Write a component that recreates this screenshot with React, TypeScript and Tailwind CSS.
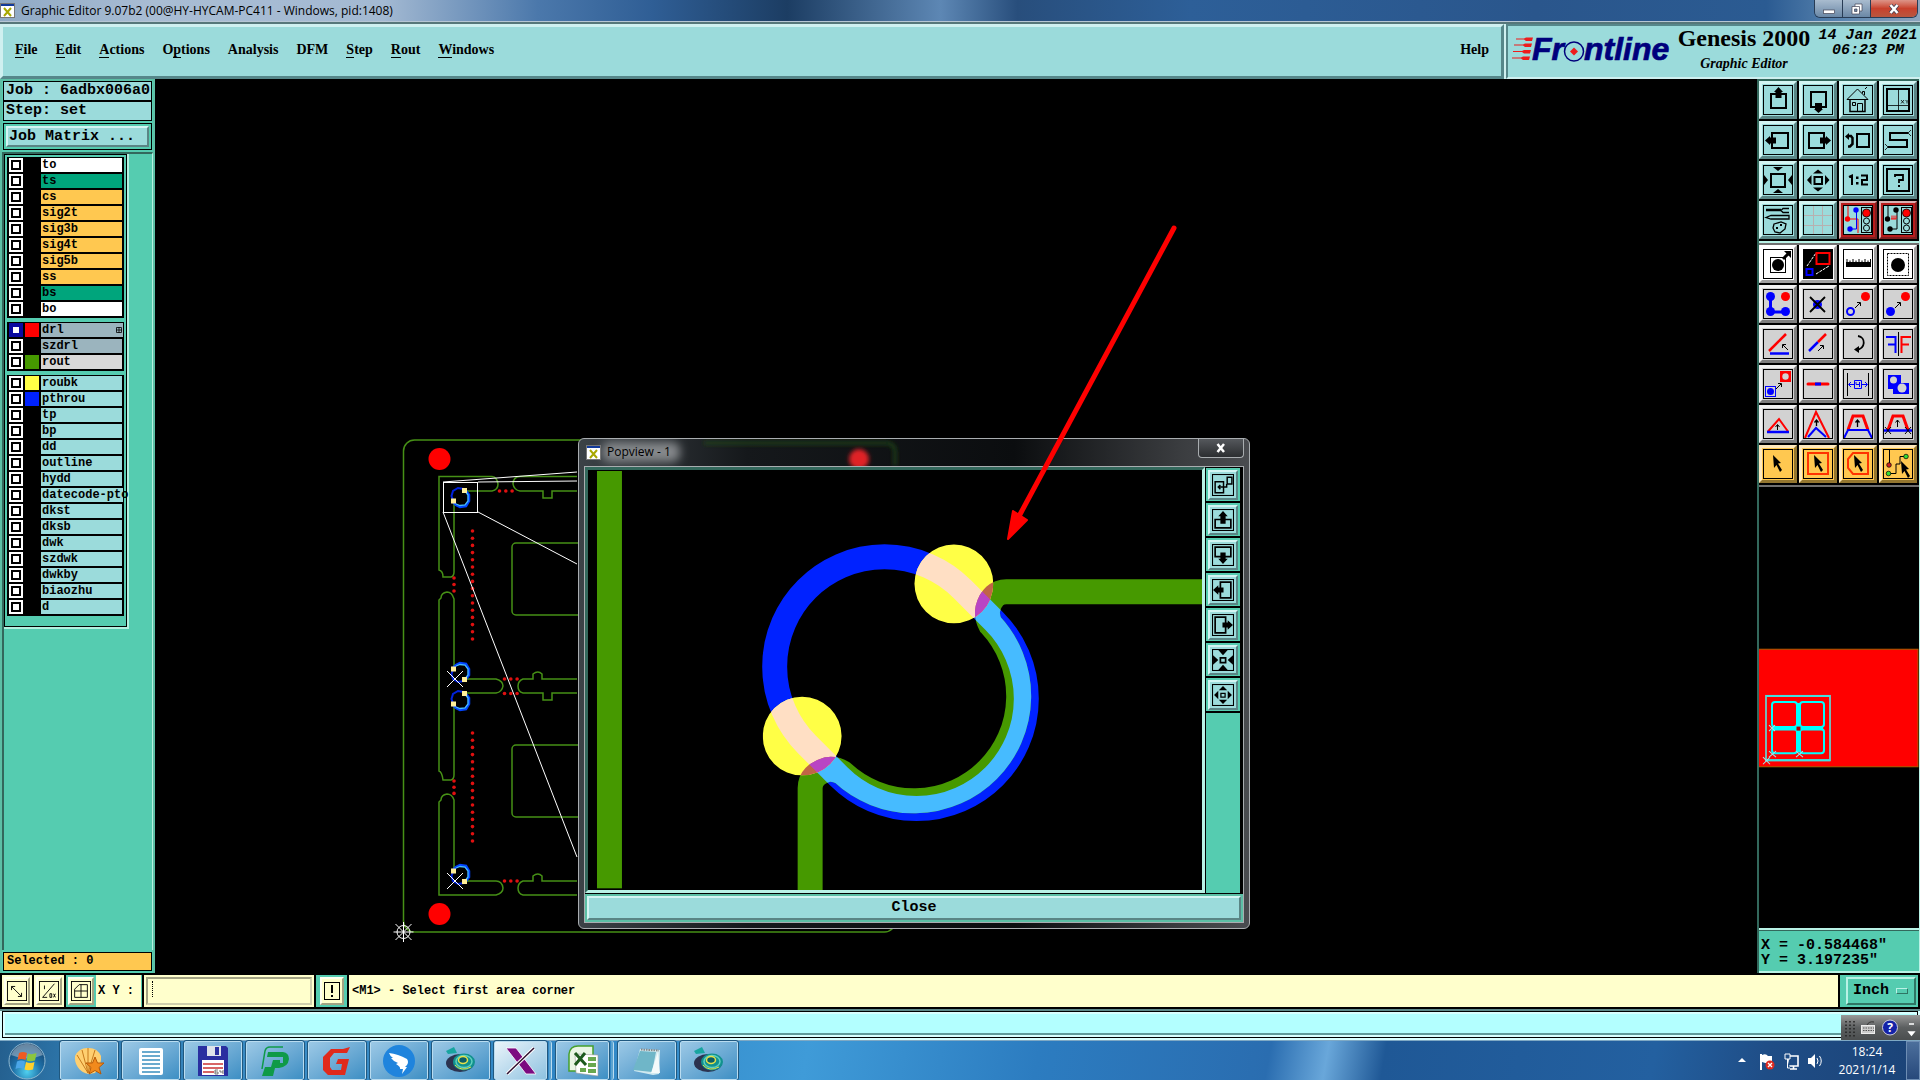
import React from 'react';

const MONO = "font-['Liberation_Mono',monospace] font-bold";
const SERIF = "font-['Liberation_Serif',serif] font-bold";
const SANS = "font-['Open_Sans',sans-serif]";
const AQUA = 'bg-[#9bdbdb] border-t-[#d3f5f3] border-l-[#d3f5f3] border-b-[#5a8585] border-r-[#5a8585]';
const GREY = 'bg-[#d2d2d2] border-t-[#f2f2f2] border-l-[#f2f2f2] border-b-[#7e7e7e] border-r-[#7e7e7e]';
const WHITE = 'bg-white border-t-white border-l-white border-b-[#a0a0a0] border-r-[#a0a0a0]';
const ORANGE = 'bg-[#ffc850] border-t-[#ffe9bd] border-l-[#ffe9bd] border-b-[#94762f] border-r-[#94762f]';
const RED = 'bg-[#9bdbdb] border-t-[#d9b0b0] border-l-[#d9b0b0] border-b-[#7c2020] border-r-[#7c2020]';
const CREAM = 'bg-[#ffffcc] border-t-[#fffff0] border-l-[#fffff0] border-b-[#a3a383] border-r-[#a3a383]';

const menus: [string, string, string][] = [
    ['', 'F', 'ile'],
    ['', 'E', 'dit'],
    ['', 'A', 'ctions'],
    ['O', 'p', 'tions'],
    ['Analysis', '', ''],
    ['DFM', '', ''],
    ['', 'S', 'tep'],
    ['', 'R', 'out'],
    ['', 'W', 'indows'],
];

interface Layer {
    name: string;
    bg: string;
    swatch?: string;
    active?: boolean;
}

const layerGroups: Layer[][] = [
    [
        { name: 'to', bg: 'bg-white' },
        { name: 'ts', bg: 'bg-[#00a57c]' },
        { name: 'cs', bg: 'bg-[#ffc850]' },
        { name: 'sig2t', bg: 'bg-[#ffc850]' },
        { name: 'sig3b', bg: 'bg-[#ffc850]' },
        { name: 'sig4t', bg: 'bg-[#ffc850]' },
        { name: 'sig5b', bg: 'bg-[#ffc850]' },
        { name: 'ss', bg: 'bg-[#ffc850]' },
        { name: 'bs', bg: 'bg-[#00a57c]' },
        { name: 'bo', bg: 'bg-white' },
    ],
    [
        { name: 'drl', bg: 'bg-[#9bb4be]', swatch: 'bg-[#ff0000]', active: true },
        { name: 'szdrl', bg: 'bg-[#9bb4be]' },
        { name: 'rout', bg: 'bg-[#d8d8d8]', swatch: 'bg-[#469900]' },
    ],
    [
        { name: 'roubk', bg: 'bg-[#9bdbdb]', swatch: 'bg-[#ffff46]' },
        { name: 'pthrou', bg: 'bg-[#9bdbdb]', swatch: 'bg-[#0022ff]' },
        { name: 'tp', bg: 'bg-[#9bdbdb]' },
        { name: 'bp', bg: 'bg-[#9bdbdb]' },
        { name: 'dd', bg: 'bg-[#9bdbdb]' },
        { name: 'outline', bg: 'bg-[#9bdbdb]' },
        { name: 'hydd', bg: 'bg-[#9bdbdb]' },
        { name: 'datecode-pto', bg: 'bg-[#9bdbdb]' },
        { name: 'dkst', bg: 'bg-[#9bdbdb]' },
        { name: 'dksb', bg: 'bg-[#9bdbdb]' },
        { name: 'dwk', bg: 'bg-[#9bdbdb]' },
        { name: 'szdwk', bg: 'bg-[#9bdbdb]' },
        { name: 'dwkby', bg: 'bg-[#9bdbdb]' },
        { name: 'biaozhu', bg: 'bg-[#9bdbdb]' },
        { name: 'd', bg: 'bg-[#9bdbdb]' },
    ],
];

/* ---------- icon pieces, drawn on a 30x30 grid ---------- */

const cursor = (x: number, y: number) => (
    <path
        d="M0 0L8 8L5 8.500L9 15L7 17L3.500 10L1 13Z"
        transform={`translate(${x} ${y})`}
        fill="#000"
    />
);

const trafficLight = (
    <>
        <rect x="18.500" y="2.500" width="10" height="25" fill="#9bdbdb" stroke="#000" />
        <circle cx="23.500" cy="8" r="4" fill="#f00" stroke="#000" strokeWidth=".8" />
        <circle cx="23.500" cy="16" r="3" fill="none" stroke="#000" />
        <circle cx="23.500" cy="23" r="3" fill="none" stroke="#000" />
    </>
);

const smallArrow = (x: number, y: number, flip?: boolean) => (
    <path
        d="M0 6L5 1M2 .5H5.500V4"
        transform={`translate(${x} ${y})${flip ? ' scale(-1 1)' : ''}`}
        fill="none"
        stroke="#000"
    />
);

const topTools: { label: string; tone: string; icon: React.ReactNode }[] = [
    { label: 'Pan up', tone: AQUA, icon: <><path d="M8 9H23V23H8Z" fill="none" stroke="#000" strokeWidth="2" /><path d="M15.500 2L20 7H18.500V13H12.500V7H11Z" /></> },
    { label: 'Pan down', tone: AQUA, icon: <><path d="M8 7H23V22H8Z" fill="none" stroke="#000" strokeWidth="2" /><path d="M15.500 28L20 24H19V18H12V24H11Z" /></> },
    { label: 'Home', tone: AQUA, icon: <><path d="M4 14.500L14.500 4L25 14.500M4 14.500H25M19.500 8.500V6.500H21.500V10M22 4L24 2" fill="none" stroke="#000" /><path d="M7 15V26.500H22V15" fill="none" stroke="#000" strokeWidth="1.500" /><path d="M9.500 17.500H12.500V20.500H9.500ZM14.500 26V18.500H19.500V26" fill="none" stroke="#000" /></> },
    { label: 'Zoom to XY', tone: AQUA, icon: <><path d="M4 4H26V26H4Z" fill="none" stroke="#000" strokeWidth="2" /><path d="M15.500 4V26M4 20.500H26M18 15L21 18.500M21 15L18 18.500M22.500 15L24 16.500L25.500 15M24 16.500V18.500" fill="none" stroke="#000" strokeWidth=".8" /></> },
    { label: 'Pan left', tone: AQUA, icon: <><path d="M9 8H25V23H9Z" fill="none" stroke="#000" strokeWidth="2" /><path d="M2 15.500L7 11V12.500H13V18.500H7V20Z" /></> },
    { label: 'Pan right', tone: AQUA, icon: <><path d="M6 8H21V23H6Z" fill="none" stroke="#000" strokeWidth="2" /><path d="M28 15.500L23 11V12.500H17V18.500H23V20Z" /></> },
    { label: 'Previous zoom', tone: AQUA, icon: <><path d="M14 9H26V22H14Z" fill="none" stroke="#000" strokeWidth="2" /><path d="M5 11H8L9.500 13V19L7 21.500H5" fill="none" stroke="#000" strokeWidth="2.500" /><path d="M2 11.500L6 8V15Z" /></> },
    { label: 'Serpentine', tone: AQUA, icon: <><path d="M25 8H7V15H24V22H5" fill="none" stroke="#000" strokeWidth="2" /><path d="M25 8L28 5M25 8L28 11M5 22L2 19M5 22L2 25" fill="none" stroke="#000" strokeWidth=".8" /></> },
    { label: 'Zoom in', tone: AQUA, icon: <><path d="M8 9H22V22H8Z" fill="none" stroke="#000" strokeWidth="2" /><path d="M10 2H20L15 6ZM10 28H20L15 24ZM1 10V20L5 15ZM29 10V20L25 15Z" /></> },
    { label: 'Zoom out', tone: AQUA, icon: <><path d="M11.500 12H19V19H11.500Z" fill="none" stroke="#000" strokeWidth="2" /><path d="M10 8.500H20L15 4.500ZM10 22.500H20L15 26.500ZM8.500 10V20L4 15ZM22 10V20L26.500 15Z" /></> },
    { label: 'Zoom 1:2', tone: AQUA, icon: <><path d="M6 12L9 10.500V20M18 10.500H24V15H19V19.500H25" fill="none" stroke="#000" strokeWidth="2" /><path d="M13 11.500H15.500V14H13ZM13 17H15.500V19.500H13Z" /></> },
    { label: 'Query', tone: AQUA, icon: <><path d="M4 4H26V26H4Z" fill="none" stroke="#000" strokeWidth="2" /><path d="M12 12V10H20V15H16V18" fill="none" stroke="#000" strokeWidth="1.800" /><path d="M15 20H17V22H15Z" /></> },
    { label: 'Setup', tone: AQUA, icon: <><path d="M3 5H18" stroke="#000" strokeWidth="2.500" /><path d="M26 3.500H20L18 5.500L20 7.500H26M3 12.500L8 10.500H26V14H8ZM11 19L18 17L23 19L22 24L17 28L12 27L10 23Z" fill="none" stroke="#000" strokeWidth="1.300" /><path d="M13 22H15V24H13ZM17 19H19V21H17Z" fill="#000" /></> },
    { label: 'Grid', tone: AQUA, icon: <path d="M10.500 1V29M19.500 1V29M1 10.500H29M1 20.500H29" fill="none" stroke="#b7b0b0" /> },
    { label: 'Nets on', tone: RED, icon: <><path d="M5 1V14H15V28" fill="none" stroke="#f00" /><path d="M13.500 5V24H8" fill="none" stroke="#00f" /><circle cx="4.500" cy="14" r="2.700" fill="#f00" /><circle cx="13" cy="5" r="2.700" fill="#00f" /><circle cx="7" cy="24" r="2.700" fill="#00f" />{trafficLight}</> },
    { label: 'Nets off', tone: RED, icon: <><path d="M5 1V14M14 5V24H8" fill="none" stroke="#000" /><path d="M8 14H13M9 10.500V14M11 10.500V14M13 10.500V14" stroke="#f00" fill="none" /><circle cx="4.500" cy="14" r="2.700" /><circle cx="13" cy="5" r="2.700" /><circle cx="7" cy="24" r="2.700" />{trafficLight}</> },
];

const editTools: { label: string; tone: string; icon: React.ReactNode }[] = [
    { label: 'Move', tone: WHITE, icon: <><rect x="7.500" y="8.500" width="15" height="15" fill="none" stroke="#000" /><circle cx="15" cy="16" r="6" /><path d="M20 10L25 5" stroke="#000" strokeWidth="3" /><path d="M21 2H28V9Z" /></> },
    { label: 'Popview', tone: WHITE, icon: <><rect width="30" height="30" fill="#000" /><path d="M4 17L13 4M13 25L26 17" stroke="#fff" strokeDasharray="3 1" /><rect x="13.500" y="4" width="13" height="11" fill="none" stroke="#f00" strokeWidth="2" /><rect x="3.500" y="20" width="6" height="6" fill="none" stroke="#00f" strokeWidth="2" /></> },
    { label: 'Measure', tone: WHITE, icon: <><path d="M3 13H28V18H3Z" /><path d="M4 10V14M7 11.500V14M10 10V14M13 11.500V14M16 10V14M19 11.500V14M22 10V14M25 11.500V14M27.500 10V14" stroke="#000" /></> },
    { label: 'Select feature', tone: WHITE, icon: <><rect x="4.500" y="4.500" width="21" height="22" fill="none" stroke="#000" strokeDasharray="2 1" /><circle cx="15" cy="16" r="7" /></> },
    { label: 'Polyline', tone: GREY, icon: <><path d="M7.500 8V23H22" fill="none" stroke="#00f" strokeWidth="3" /><circle cx="7.500" cy="7.500" r="4.500" fill="#00f" /><circle cx="7.500" cy="22.500" r="4.500" fill="#00f" /><circle cx="22.500" cy="22.500" r="4.500" fill="#00f" /><circle cx="22.500" cy="7.500" r="4.500" fill="#f00" /></> },
    { label: 'Delete', tone: GREY, icon: <><circle cx="14.500" cy="15.500" r="4.500" fill="#00f" /><path d="M7 8L22 23M22 8L7 23" stroke="#000" strokeWidth="1.800" /></> },
    { label: 'Copy pad', tone: GREY, icon: <><circle cx="7.500" cy="22.500" r="3.500" fill="none" stroke="#00f" strokeWidth="2" /><circle cx="22.500" cy="7.500" r="4.500" fill="#f00" />{smallArrow(12, 13)}</> },
    { label: 'Move pad', tone: GREY, icon: <><circle cx="7.500" cy="22.500" r="4.500" fill="#00f" /><circle cx="22.500" cy="7.500" r="4.500" fill="#f00" />{smallArrow(12, 13)}</> },
    { label: 'Rotate line', tone: GREY, icon: <><path d="M6 22L23 5" stroke="#f00" strokeWidth="2.500" /><path d="M7 24.500H26" stroke="#00f" strokeWidth="2.500" />{smallArrow(25, 15, true)}</> },
    { label: 'Stretch line', tone: GREY, icon: <><path d="M6 22L15 13" stroke="#00f" strokeWidth="2.500" /><path d="M15 13L23 5" stroke="#f00" strokeWidth="2.500" />{smallArrow(15, 16)}</> },
    { label: 'Rotate', tone: GREY, icon: <><path d="M15 7C23 8 23 20 13 21" fill="none" stroke="#000" strokeWidth="1.800" /><path d="M16 17L11 20.500L16 24Z" /></> },
    { label: 'Mirror', tone: GREY, icon: <><path d="M15.500 3V27" stroke="#000" /><path d="M3 8H12.500V24M12 15.500H5" fill="none" stroke="#00f" strokeWidth="2" /><path d="M28 8H18.500V24M19 15.500H26" fill="none" stroke="#f00" strokeWidth="2" /></> },
    { label: 'Resize', tone: GREY, icon: <><rect x="2.500" y="17.500" width="10" height="10" fill="none" stroke="#00f" /><circle cx="7.500" cy="22.500" r="3.500" fill="#00f" /><rect x="17" y="2" width="11" height="11" fill="#f00" /><circle cx="22.500" cy="7.500" r="3.200" fill="#d2d2d2" />{smallArrow(13, 14)}</> },
    { label: 'Merge line', tone: GREY, icon: <><path d="M5 15H25" stroke="#f00" strokeWidth="3" strokeLinecap="round" /><path d="M12 15H18" stroke="#00f" strokeWidth="3" /></> },
    { label: 'Spacing', tone: GREY, icon: <><path d="M4.500 4V27M25.500 4V27" stroke="#000" /><path d="M6 15.500H11M19 15.500H24M8 13L5.500 15.500L8 18M22 13L24.500 15.500L22 18M11.500 11.500H18.500V19.500H11.500ZM13 13V15.500H16.500M16.500 13V18" fill="none" stroke="#00f" /></> },
    { label: 'Surface', tone: GREY, icon: <><path d="M5 6H18V14H26V25H10V20H5Z" fill="#00f" /><circle cx="10.500" cy="11" r="3.500" fill="#d2d2d2" /><circle cx="19" cy="19" r="4.500" fill="#d2d2d2" /></> },
    { label: 'Slide corner', tone: GREY, icon: <><path d="M5 22.500L16 10L25 22.500" fill="none" stroke="#f00" strokeWidth="2" /><path d="M4 23H26" stroke="#00f" strokeWidth="2.500" /><path d="M14.500 21V16M12.500 18L14.500 15.500L16.500 18" fill="none" stroke="#000" /></> },
    { label: 'Slide peak', tone: GREY, icon: <><path d="M2 29L13 3L26 29" fill="none" stroke="#f00" strokeWidth="2" /><path d="M5 28L13 19L23 28" fill="none" stroke="#00f" strokeWidth="2" /><path d="M13.500 17V11M11.500 13.500L13.500 11L15.500 13.500" fill="none" stroke="#000" strokeWidth="1.300" /></> },
    { label: 'Slide edge', tone: GREY, icon: <><path d="M5 21L10 7H20L25 21" fill="none" stroke="#f00" strokeWidth="3" /><path d="M1 29L5 21H25L29 29" fill="none" stroke="#00f" strokeWidth="2" /><path d="M14.500 18V11M12.500 13.500L14.500 11L16.500 13.500" fill="none" stroke="#000" strokeWidth="1.300" /></> },
    { label: 'Slide between', tone: GREY, icon: <><path d="M5 21L10 7H20L25 21" fill="none" stroke="#f00" strokeWidth="3" /><path d="M1 21.500H29" fill="none" stroke="#00f" strokeWidth="2.500" /><path d="M14.500 18V11M12.500 13.500L14.500 11L16.500 13.500M2 18L8 25M8 18L2 25M22 18L28 25M28 18L22 25" fill="none" stroke="#000" /></> },
    { label: 'Select', tone: ORANGE, icon: cursor(10, 6) },
    { label: 'Select by frame', tone: ORANGE, icon: <><rect x="5" y="4" width="20" height="21" fill="none" stroke="#f30" strokeWidth="2" />{cursor(11, 6)}</> },
    { label: 'Select by polygon', tone: ORANGE, icon: <><path d="M10 4H25V25H10L5 19V10Z" fill="none" stroke="#f30" strokeWidth="2" />{cursor(11, 6)}</> },
    { label: 'Select net', tone: ORANGE, icon: <><path d="M6.500 1V16M7 24.500H13V15H17V7.500H22" fill="none" stroke="#000" /><circle cx="6" cy="16" r="2.300" fill="#c22" stroke="#000" strokeWidth=".7" /><circle cx="5.500" cy="24.500" r="2.300" fill="#3d3" stroke="#000" strokeWidth=".7" /><circle cx="23" cy="7.500" r="2.300" fill="#3d3" stroke="#000" strokeWidth=".7" />{cursor(18, 12)}</> },
];

const popTools: { label: string; icon: React.ReactNode }[] = [
    { label: 'Set area', icon: <path d="M3 7.500H11V18H3ZM14.500 3H19V9.500H14.500ZM14 9.500V12.500H6M8 10.500L6 12.500L8 14.500" fill="none" stroke="#000" strokeWidth="1.400" /> },
    { label: 'Pan view up', icon: <><path d="M3 10H18V18H3Z" fill="none" stroke="#000" strokeWidth="1.600" /><path d="M10.500 2L15 7H13V14H8V7H6Z" /></> },
    { label: 'Pan view down', icon: <><path d="M3 3H18V12H3Z" fill="none" stroke="#000" strokeWidth="1.600" /><path d="M10.500 19L15 14H13V8H8V14H6Z" /></> },
    { label: 'Pan view left', icon: <><path d="M8 3H18V18H8Z" fill="none" stroke="#000" strokeWidth="1.600" /><path d="M1 10.500L6 6V8H11V13H6V15Z" /></> },
    { label: 'Pan view right', icon: <><path d="M3 3H13V18H3Z" fill="none" stroke="#000" strokeWidth="1.600" /><path d="M20 10.500L15 6V8H10V13H15V15Z" /></> },
    { label: 'Zoom view in', icon: <><path d="M8 8.500H13V13H8Z" fill="none" stroke="#000" strokeWidth="1.600" /><path d="M6 1H15L10.500 6ZM6 20H15L10.500 15ZM1 6V15L6 10.500ZM20 6V15L15 10.500Z" /></> },
    { label: 'Zoom view out', icon: <><path d="M8.500 9H12.500V12.500H8.500Z" fill="none" stroke="#000" strokeWidth="1.200" /><path d="M6.500 6H14.500L10.500 2ZM6.500 15H14.500L10.500 19ZM6 6.500V14.500L2 10.500ZM15 6.500V14.500L19 10.500Z" /></> },
];

const ToolButton: React.FC<{ label: string; tone: string; children: React.ReactNode }> = ({ label, tone, children }) => (
    <button aria-label={label} className={`flex h-[38px] w-[38px] items-center justify-center border-[3px] ${tone}`}>
        <svg viewBox="0 0 30 30" className={`h-[30px] w-[30px] shrink-0 ${tone === RED ? 'outline-2 outline-[#b81c1c]' : ''}`}>
            {children}
            <rect x=".5" y=".5" width="29" height="29" fill="none" stroke="#000" />
        </svg>
    </button>
);

const XIcon = () => (
    <svg viewBox="0 0 15 15" className="h-[15px] w-[15px] shrink-0">
        <rect width="15" height="15" fill="#fff" />
        <rect width="15" height="3" fill="#123a9a" />
        <path d="M4 5L11 13M11 5L4 13" stroke="#a8a800" strokeWidth="2" />
        <rect x=".5" y=".5" width="14" height="14" fill="none" stroke="#777" />
    </svg>
);

/* ---------- title + menu ---------- */

const TitleBar = () => (
    <header className="flex h-[22px] shrink-0 justify-between border-b border-[#b7c6d4] bg-[linear-gradient(90deg,#8fa9c4_0%,#a9bdd4_8%,#a3b9d2_20%,#4b78ab_28%,#2f5e95_34%,#1c3d63_41%,#5d87b4_49%,#284e7c_53%,#2d5f98_62%,#2a568c_80%,#2b5b92_92%,#5a85b0_96%,#8da5bd_100%)]">
        <div className="flex items-center gap-1.5">
            <XIcon />
            <h1 className={`${SANS} text-[12px] leading-5 text-black`}>Graphic Editor 9.07b2 (00@HY-HYCAM-PC411 - Windows, pid:1408)</h1>
        </div>
        <div className="mr-[2px] flex h-[18px] overflow-hidden rounded-b-md border border-t-0 border-[#283c55]">
            <button aria-label="Minimize" className="flex w-7 items-center justify-center border-r border-[#283c55] bg-linear-to-b from-[#a9bccf] to-[#6b88a6]">
                <svg viewBox="0 0 12 12" className="h-3 w-3"><rect x=".5" y="7" width="11" height="3.500" fill="#fff" stroke="#445" strokeWidth=".7" /></svg>
            </button>
            <button aria-label="Restore" className="flex w-7 items-center justify-center border-r border-[#283c55] bg-linear-to-b from-[#a9bccf] to-[#6b88a6]">
                <svg viewBox="0 0 12 12" className="h-3 w-3"><path d="M4 1H11V8H4Z" fill="#fff" stroke="#445" strokeWidth=".7" /><path d="M1 3.500H8.500V11H1Z" fill="#fff" stroke="#445" strokeWidth=".7" /><path d="M3.500 6H6V8.500H3.500Z" fill="#6b88a6" stroke="#445" strokeWidth=".7" /></svg>
            </button>
            <button aria-label="Close window" className="flex w-[46px] items-center justify-center bg-linear-to-b from-[#dc9488] via-[#c8402c] to-[#b8563f]">
                <svg viewBox="0 0 12 12" className="h-3 w-3"><path d="M2.500 2L9.500 10M9.500 2L2.500 10" stroke="#445" strokeWidth="4" /><path d="M2.500 2L9.500 10M9.500 2L2.500 10" stroke="#fff" strokeWidth="2.500" /></svg>
            </button>
        </div>
    </header>
);

const FrontlineLogo = () => (
    <svg viewBox="0 0 164 32" className="h-8 w-[164px] shrink-0 overflow-visible">
        <path d="M4 4.500H12L14 3.500H21L20 7H14L12 5.500H4ZM2 10.500H11L13 9.500H20L19 13H13L11 11.500H2ZM1 17H10L12 16H19L18 19.500H12L10 18H1ZM0 23.500H9L11 22.500H18L17 26H11L9 24.500H0Z" fill="#ee1c1c" />
        <g fill="#00007c" stroke="#00007c" strokeWidth=".7" fontFamily="Liberation Sans, sans-serif" fontWeight="bold" fontStyle="italic" fontSize="32">
            <text x="20" y="26">Fr</text>
            <text x="72" y="26">ntline</text>
        </g>
        <circle cx="62" cy="17.500" r="9.500" fill="#9bdbdb" stroke="#00007c" strokeWidth="1.500" />
        <path d="M62 13.500L66 17.500L62 21.500L58 17.500Z" fill="#ee1c1c" />
    </svg>
);

const MenuBar = () => (
    <div className="flex h-[57px] shrink-0 gap-[2px] border-t-2 border-[#56777a] bg-[#cff0f0]">
        <nav className={`${SERIF} flex flex-1 items-center justify-between border-[3px] border-t-[#cff0f0] border-l-[#cff0f0] border-r-[#56878a] border-b-[#56878a] bg-[#9bdbdb] px-3 pb-1 text-[14px] leading-4`}>
            <div className="flex gap-[18px]">
                {menus.map(([pre, key, post]) => (
                    <button key={pre + key + post}>
                        {pre}
                        <span className="border-b border-black">{key}</span>
                        {post}
                    </button>
                ))}
            </div>
            <button>Help</button>
        </nav>
        <div className="flex w-[414px] shrink-0 items-start border-t-2 border-l-2 border-[#56878a] border-b-2 border-b-[#cff0f0] bg-[#9bdbdb] pl-1">
            <div className="pt-2"><FrontlineLogo /></div>
            <div className={`${SERIF} flex w-[136px] flex-col items-center`}>
                <strong className="text-[24px] leading-6">Genesis 2000</strong>
                <em className="mt-1 text-[14px] leading-5">Graphic Editor</em>
            </div>
            <time className={`${MONO} ml-1 flex-1 pt-0.5 text-center text-[15px] leading-[15px] whitespace-nowrap italic`}>
                14 Jan 2021
                <br />
                06:23 PM
            </time>
        </div>
    </div>
);

/* ---------- left column ---------- */

const LayerRow: React.FC<{ layer: Layer }> = ({ layer }) => (
    <li className="flex h-4 items-center gap-[2px] border-b-2 border-black bg-black">
        <label className="flex h-[14px] min-w-0 flex-1 items-center gap-[2px]">
            <input
                type="checkbox"
                defaultChecked={layer.active}
                className={`h-[14px] w-[14px] shrink-0 appearance-none border-2 bg-white outline-2 -outline-offset-4 ${layer.active ? 'border-[#0a0aa0] outline-[#0a0aa0]' : 'border-white outline-black'}`}
            />
            <span className={`h-[14px] w-[14px] shrink-0 ${layer.swatch ?? 'bg-black'}`} />
            <span className={`${MONO} flex h-[14px] w-[82px] items-center pl-px text-[12px] leading-[14px] whitespace-nowrap ${layer.bg}`}>
                {layer.name}
            </span>
        </label>
        {layer.active && (
            <svg viewBox="0 0 6 6" className="-ml-2.5 h-1.5 w-1.5 shrink-0">
                <path d="M.5 .5H5.500V5.500H.5ZM3 0V6M0 3H6" fill="none" stroke="#000" strokeWidth=".8" />
            </svg>
        )}
    </li>
);

const LeftPanel = () => (
    <aside className="flex w-[155px] shrink-0 flex-col gap-[2px] border-t-2 border-r-2 border-l-2 border-[#5cbfa5] bg-[#55ccb0]">
        <div className={`${MONO} mr-px ml-px border border-black bg-[#9bdbdb] text-[15px] leading-[18px] whitespace-pre`}>
            <p className="border-b-2 border-black pl-[2px]">Job : 6adbx006a0</p>
            <p className="pl-[2px]">Step: set</p>
        </div>
        <div className="mr-px ml-px border border-black p-[2px]">
            <button className={`${MONO} block h-[21px] w-full border-2 pl-px text-left text-[15px] leading-[17px] ${AQUA}`}>Job Matrix ...</button>
        </div>
        <div className="flex flex-1 border-t-2 border-l-2 border-[#33685c] border-r border-r-[#b4f0e0]">
            <div className="flex-1">
                <div className="w-[125px] border-r-2 border-b-2 border-[#b4f0e0]">
                    <ul className="flex flex-col gap-1 border border-black p-[2px] pb-2.5">
                        {layerGroups.map((group) => (
                            <li key={group[0].name}>
                                <ul className="border-x-2 border-t border-black">
                                    {group.map((layer) => (
                                        <LayerRow key={layer.name} layer={layer} />
                                    ))}
                                </ul>
                            </li>
                        ))}
                    </ul>
                </div>
            </div>
        </div>
        <p className={`${MONO} mx-px mb-[2px] border border-black bg-[#ffc850] pl-[3px] text-[12px] leading-[17px]`}>Selected : 0</p>
    </aside>
);

/* ---------- board drawing ---------- */

const dotRow = (n: number, x: number, y: number, dx: number, dy: number) =>
    Array.from({ length: n }, (_, i) => <circle key={`${x}-${y}-${i}`} cx={x + i * dx} cy={y + i * dy} r="1.8" />);

const Ring: React.FC<{ cx: number; cy: number; flip?: boolean }> = ({ cx, cy, flip }) => (
    <g transform={`translate(${cx} ${cy})${flip ? ' scale(1 -1)' : ''}`} fill="none">
        <path d="M-7 3L-8.500 -1L-7 -6L-2 -9L4 -8" stroke="#0022dd" strokeWidth="2" />
        <path d="M6 -6L9 -2V4L6 9L0 10L-4 8L-7 5" stroke="#0044ff" strokeWidth="2.500" />
        <path d="M5 -6L8 -2V4L5 8L0 8.500L-4 7" stroke="#46bbff" strokeWidth="1.300" />
        <path d="M2 -9H7V-4H2ZM-9 1.500H-4V6.500H-9Z" fill="#ffee99" />
    </g>
);

const Board = () => (
    <svg viewBox="155 79 1602 894" preserveAspectRatio="xMinYMin meet" className="absolute inset-0 h-full w-full">
        <g fill="none" stroke="#469016" strokeWidth="1.500">
            <rect x="403.500" y="440" width="492" height="492" rx="11" />
            <path d="M467 491H492Q498 490 498 484Q497 477 492 476.500H439V570Q443 571 443 577H451Q454 576 454 572V502" />
            <path d="M454 667V599Q452 592 447 592Q441 593 441 598L439 600V771Q442 772 443 780H451Q454 779 454 775V707" />
            <path d="M454 869V800Q452 794 447 794Q441 795 441 800L439 802V895H496Q503 893 503 888Q502 881 496 881H467" />
            <path d="M467 679H496Q503 681 503 686Q502 692 496 693H467" />
            <path d="M577 476.500H520Q513 477 513 484Q514 490 520 491H543V498H552V491H577" />
            <path d="M577 679H542V674Q538 670 533 674V679H523Q518 681 518 686Q518 692 523 693H543V700H552V693H577" />
            <path d="M577 881H542V876Q538 872 533 876V881H523Q518 883 518 888Q518 894 523 895H577" />
            <rect x="512" y="543" width="160" height="72" rx="4" />
            <rect x="512" y="745" width="160" height="72" rx="4" />
        </g>
        <g fill="#e01010">
            {dotRow(16, 472.5, 531, 0, 7.2)}
            {dotRow(16, 472.5, 733, 0, 7.2)}
            {dotRow(3, 454, 578, 0, 6.5)}
            {dotRow(3, 454, 781, 0, 6.2)}
            {dotRow(3, 499.5, 491, 6.3, 0)}
            {dotRow(3, 504.5, 679, 6.3, 0)}
            {dotRow(3, 504.5, 693.5, 6.3, 0)}
            {dotRow(3, 504.5, 881, 6.3, 0)}
        </g>
        <g fill="#f00">
            <circle cx="439.500" cy="459" r="11" />
            <circle cx="439.500" cy="914" r="11" />
        </g>
        <Ring cx={460} cy={497} />
        <Ring cx={460} cy={673} flip />
        <Ring cx={460} cy={700} />
        <Ring cx={460} cy={875} flip />
        <g fill="none" stroke="#fff">
            <rect x="443.500" y="482.500" width="34" height="30" />
            <path d="M443 482L577 472M478 482L577 481M478 512L577 564M443 512L577 857" />
            <path d="M447 671L463 687M463 671L447 687M447 873L463 889M463 873L447 889" />
            <circle cx="403.500" cy="932" r="6.500" />
            <path d="M393.500 932H413.500M403.500 922V942M395.500 924L411.500 940M411.500 924L395.500 940" />
        </g>
    </svg>
);

/* ---------- popview window ---------- */

const BLUE_PATH = 'M962.8 589.2A110 110 0 1 0 807.200 744.800L839.200 776.800A110 110 0 0 0 994.800 621.200Z';
const GREEN_PATH = 'M1210 592H1007Q993 592 988.500 609Q987 617 991.200 624.800A105 105 0 0 1 842.800 773.200Q836 769 828 770Q810.500 775 810.500 788.500V895';

const PopCanvas = () => (
    <svg viewBox="588 470 615 420" preserveAspectRatio="xMinYMin meet" className="h-full w-full bg-black">
        <defs>
            <mask id="blueMask" maskUnits="userSpaceOnUse" x="588" y="470" width="615" height="420">
                <path d={BLUE_PATH} fill="none" stroke="#fff" strokeWidth="25" />
            </mask>
            <clipPath id="pads">
                <circle cx="954.500" cy="584" r="39.500" />
                <circle cx="802.500" cy="736.500" r="39.500" />
            </clipPath>
        </defs>
        <rect x="597" y="471" width="25" height="418" fill="#469900" />
        <g fill="none" strokeWidth="25">
            <path d={BLUE_PATH} stroke="#0022ff" />
            <path d={GREEN_PATH} stroke="#469900" />
            <g mask="url(#blueMask)"><path d={GREEN_PATH} stroke="#46bbff" /></g>
        </g>
        <g clipPath="url(#pads)" fill="none" strokeWidth="25">
            <rect x="740" y="530" width="270" height="260" fill="#ffff46" stroke="none" />
            <path d={BLUE_PATH} stroke="#ffdfc4" />
            <path d={GREEN_PATH} stroke="#c06446" />
            <g mask="url(#blueMask)"><path d={GREEN_PATH} stroke="#b944c4" /></g>
        </g>
    </svg>
);

const Popview = () => (
    <section className="absolute top-[359px] left-[423px] flex h-[491px] w-[672px] flex-col rounded-md border border-[#a9adb0] bg-[linear-gradient(90deg,#3c4247_0%,#15181b_25%,#0b0d0f_65%,#3b3d40_90%,#4a4c50_100%)] px-[5px] pb-[5px]">
        <div className="relative flex h-[27px] shrink-0 items-start justify-between pl-[2px]">
            <svg viewBox="0 0 660 27" preserveAspectRatio="xMinYMin meet" className="absolute inset-0 h-full w-full">
                <defs>
                    <filter id="glass" x="-50%" y="-50%" width="200%" height="200%"><feGaussianBlur stdDeviation="2" /></filter>
                    <filter id="haze" x="-50%" y="-100%" width="200%" height="300%"><feGaussianBlur stdDeviation="5" /></filter>
                </defs>
                <path d="M120 4H303Q311 5 311 13V27" fill="none" stroke="#1f4416" strokeWidth="3" filter="url(#glass)" />
                <circle cx="275" cy="20" r="10" fill="#e02428" filter="url(#glass)" />
                <rect x="18" y="3" width="78" height="20" rx="8" fill="#85888b" filter="url(#haze)" />
            </svg>
            <div className="relative flex items-center gap-1.5 pt-1">
                <XIcon />
                <h2 className={`${SANS} text-[12px] leading-[18px] text-black`}>Popview - 1</h2>
            </div>
            <button aria-label="Close popview" className="relative flex h-[19px] w-[46px] items-center justify-center rounded-b border border-t-0 border-[#a9adb0] bg-linear-to-b from-[#55585c] to-[#2c2e31]">
                <svg viewBox="0 0 12 12" className="h-3 w-3"><path d="M2.500 2L9 10M9 2L2.500 10" stroke="#fff" strokeWidth="2.500" /></svg>
            </button>
        </div>
        <div className="flex min-h-0 flex-1 flex-col border border-[#a9adb0] bg-black">
            <div className="flex min-h-0 flex-1">
                <div className="min-w-0 flex-1 border-[3px] border-t-[#33685c] border-l-[#33685c] border-r-[#b9f2e6] border-b-[#b9f2e6]">
                    <PopCanvas />
                </div>
                <div className="flex w-[38px] shrink-0 flex-col gap-[2px] pt-px pr-[3px] pl-px">
                    {popTools.map((tool) => (
                        <div key={tool.label} className="flex h-[33px] shrink-0 items-center justify-center bg-[#55ccb0]">
                            <button aria-label={tool.label} className={`flex h-[30px] w-[30px] items-center justify-center border-2 ${AQUA}`}>
                                <svg viewBox="0 0 21 21" className="h-[22px] w-[22px] shrink-0">
                                    {tool.icon}
                                    <rect x=".5" y=".5" width="20" height="20" fill="none" stroke="#000" />
                                </svg>
                            </button>
                        </div>
                    ))}
                    <div className="flex-1 bg-[#55ccb0]" />
                </div>
            </div>
            <div className="mt-px bg-[#5cbfa5] p-[2px]">
                <button className={`${MONO} block h-6 w-full border-2 text-[15px] leading-5 ${AQUA}`}>Close</button>
            </div>
        </div>
    </section>
);

const Canvas = () => (
    <main className="relative min-w-0 flex-1 overflow-hidden bg-black">
        <Board />
        <Popview />
        <svg viewBox="155 79 1602 894" preserveAspectRatio="xMinYMin meet" className="pointer-events-none absolute inset-0 h-full w-full">
            <path d="M1174 228L1017 520" stroke="#f00" strokeWidth="5" strokeLinecap="round" />
            <path d="M1008 539L1013 511L1027 520Z" fill="#f00" stroke="#f00" strokeWidth="2" strokeLinejoin="round" />
        </svg>
    </main>
);

/* ---------- right column ---------- */

const RightPanel = () => (
    <aside className="flex w-[163px] shrink-0 flex-col border-r border-l-2 border-l-[#33685c] border-r-[#b9f2e6] bg-black">
        <div className="grid grid-cols-[repeat(4,38px)] gap-[2px] border-t-2 border-b-2 border-t-[#33685c] border-b-[#b9f2e6] pb-[2px]">
            {topTools.map((tool) => (
                <ToolButton key={tool.label} label={tool.label} tone={tool.tone}>{tool.icon}</ToolButton>
            ))}
        </div>
        <div className="grid grid-cols-[repeat(4,38px)] gap-[2px] border-t-2 border-b-2 border-[#707070] pb-[2px]">
            {editTools.map((tool) => (
                <ToolButton key={tool.label} label={tool.label} tone={tool.tone}>{tool.icon}</ToolButton>
            ))}
        </div>
        <div className="min-h-0 flex-1 border-b-2 border-[#b9f2e6]">
            <svg viewBox="1759 489 160 439" preserveAspectRatio="none" className="h-full w-full">
                <rect x="1758" y="650.500" width="160" height="117" fill="#f00" stroke="#b06000" />
                <rect x="1766" y="697" width="64" height="64" fill="none" stroke="#78b8b8" strokeWidth="2" />
                <g fill="none" stroke="#00ffff" strokeWidth="2">
                    <path d="M1766 697H1830M1766 761H1830" stroke="#40e0e0" />
                    <rect x="1772" y="703" width="25" height="25" rx="3" />
                    <rect x="1800" y="703" width="24" height="25" rx="3" />
                    <rect x="1772" y="730" width="25" height="24" rx="3" />
                    <rect x="1800" y="730" width="24" height="24" rx="3" />
                    <path d="M1798.500 704V753M1773 729.500H1823" strokeWidth="4" />
                </g>
                <path d="M1763 758L1770 765M1770 758L1763 765M1769 726L1775 732M1775 726L1769 732M1769 752L1776 758M1776 752L1769 758M1796 752L1803 758M1803 752L1796 758" stroke="#9ee" fill="none" />
                <path d="M1796.500 727.500H1800.500V731.500H1796.500Z" fill="#a00" />
            </svg>
        </div>
        <div className={`${MONO} h-[43px] border-t border-b-2 border-t-[#33685c] border-b-[#b9f2e6] bg-[#55ccb0] pt-[7px] pl-[2px] text-[15px] leading-[15px] whitespace-pre`}>
            <p>X = -0.584468"</p>
            <p>Y = 3.197235"</p>
        </div>
    </aside>
);

/* ---------- bottom rows ---------- */

const statusIcons: { label: string; wrap: string; d: string }[] = [
    { label: 'Snap', wrap: 'bg-[#ffffcc]', d: 'M5 6L16 17M5 10V6H9M12 17H16V13' },
    { label: 'Angle', wrap: 'bg-[#ffffcc]', d: 'M4 18L17 3M4 18H9M6 5V9M12 14H14V18H12ZM16 14L18 18M18 14L16 18' },
    { label: 'Grid snap', wrap: 'bg-[#55ccb0]', d: 'M4 9L9 4H18V18H4ZM11 4V18M4 11H18' },
];

const StatusRow = () => (
    <div className={`${MONO} flex h-9 shrink-0 gap-[2px] border-y-2 border-black bg-black text-[12px]`}>
        <div className="flex">
            <div className="flex gap-[2px] bg-black pl-[2px]">
                {statusIcons.map((icon) => (
                    <div key={icon.label} className={`flex w-[30px] items-center justify-center ${icon.wrap}`}>
                        <button aria-label={icon.label} className={`flex h-[28px] w-[26px] items-center justify-center border-2 ${CREAM}`}>
                            <svg viewBox="0 0 22 22" className="h-[22px] w-[20px] shrink-0">
                                <path d={icon.d} fill="none" stroke="#000" />
                                <rect x=".5" y=".5" width="21" height="21" fill="none" stroke="#000" />
                            </svg>
                        </button>
                    </div>
                ))}
            </div>
            <label htmlFor="xy" className="w-[46px] border-r border-[#55ccb0] bg-[#ffffcc] pl-[2px] leading-8 whitespace-pre">X Y :</label>
        </div>
        <div className="relative w-[170px] bg-[#ffffcc] p-[2px]">
            <input id="xy" className="h-7 w-full border-2 border-t-[#a3a383] border-l-[#a3a383] border-r-[#cfcfae] border-b-[#cfcfae] bg-[#ffffcc] px-2 outline-none" />
            <span className="pointer-events-none absolute top-1.5 left-2 h-4 border-l border-dotted border-black" />
        </div>
        <div className="flex w-[31px] items-center justify-center bg-[#55ccb0]">
            <button aria-label="Alert" className={`flex h-7 w-6 items-center justify-center border-2 ${CREAM}`}>
                <svg viewBox="0 0 16 18" className="h-[18px] w-4 shrink-0">
                    <rect x=".5" y=".5" width="15" height="17" fill="none" stroke="#000" />
                    <path d="M8 3V11M8 13V15" stroke="#000" strokeWidth="2" />
                </svg>
            </button>
        </div>
        <output className="flex-1 bg-[#ffffcc] pl-[3px] leading-8">&lt;M1&gt; - Select first area corner</output>
        <div className="mr-[2px] w-[78px] bg-[#55ccb0] py-[2px] pr-[2px] pl-[6px]">
            <div className="relative h-7 border-2 border-t-[#b9f2e6] border-l-[#b9f2e6] border-r-[#2f7564] border-b-[#2f7564]">
                <select aria-label="Units" className="h-full w-full appearance-none pl-[5px] text-[15px] leading-6 outline-none">
                    <option>Inch</option>
                    <option>MM</option>
                </select>
                <span className="pointer-events-none absolute top-[9px] right-1.5 h-1.5 w-3 border border-t-[#b9f2e6] border-l-[#b9f2e6] border-r-[#2f7564] border-b-[#2f7564]" />
            </div>
        </div>
    </div>
);

const MessageRow = () => (
    <div className="relative h-[31px] shrink-0 border-t-2 border-[#5f8a8a] bg-[#d9ffff]">
        <div className="mx-[2px] h-[27px] border border-black p-[2px]">
            <div className="h-full border-b-2 border-[#5f9a9a] bg-[#b3ffff]" />
        </div>
        <div className="absolute right-0 bottom-0 flex h-[25px] w-[79px] items-center gap-2 bg-linear-to-b from-[#9a9a9a] via-[#5c5f60] to-[#4b4e4f] px-1">
            <svg viewBox="0 0 79 25" className="absolute inset-0 h-full w-full">
                <path d="M5 6V22M9 6V22M13 6V22" stroke="#222" strokeWidth="1.500" strokeDasharray="1.500 2" />
                <rect x="20.500" y="10.500" width="13" height="8" fill="#ccc" stroke="#eee" />
                <path d="M22 13H33M22 15.500H33" stroke="#555" strokeDasharray="1.500 1" />
                <path d="M26 10Q28 6 33 7" stroke="#333" fill="none" />
                <circle cx="49" cy="12.500" r="7.500" fill="#1422a8" stroke="#ccd" />
                <path d="M68 9H73M68 17H73L70.500 20Z" stroke="#fff" strokeWidth="1.500" fill="#fff" />
            </svg>
            <button aria-label="Language bar help" className={`${SANS} relative ml-10 w-2.5 text-center text-[12px] leading-4 font-bold text-white`}>?</button>
        </div>
    </div>
);

const diskIcon = (
    <g>
        <ellipse cx="15" cy="18" rx="14" ry="9" fill="#2c3350" />
        <ellipse cx="19" cy="17" rx="11" ry="8.500" fill="#12918e" />
        <ellipse cx="19" cy="16.500" rx="8" ry="6" fill="none" stroke="#5fd0c0" strokeWidth="1.500" />
        <ellipse cx="18" cy="15" rx="4.500" ry="3.500" fill="#0c5e66" stroke="#e6e24a" strokeWidth="1.500" />
        <path d="M1 6L9 2L12 8L3 9Z" fill="#18a5a0" />
        <path d="M10 20Q16 27 26 22" stroke="#e6e24a" fill="none" />
    </g>
);

const taskIcons: { label: string; active?: boolean; stack?: boolean; icon: React.ReactNode }[] = [
    { label: 'Shell', icon: <><path d="M16 29C6 28 1 18 2 11Q6 3 14 3Q24 2 28 11Q29 20 22 28Z" fill="#ffcf70" /><path d="M15 28L4 10M15 28L9 5M15 28L15 3M15 28L22 5" stroke="#c77a1c" /><path d="M22 12L24.500 18L31 18L26 22.500L28 29L22 25.500L16 29L18 22.500L13 18L19.500 18Z" fill="#f28a1c" stroke="#b85a08" /></> },
    { label: 'Text file', icon: <><rect x="4" y="3" width="24" height="27" rx="2" fill="#fff" /><path d="M7 7H25M7 11H25M7 15H25M7 19H25M7 23H25M7 27H25" stroke="#3a8fbf" strokeWidth="1.500" /></> },
    { label: 'Save tool', icon: <><path d="M1 1H29L31 3V31H1Z" fill="#2a2fa0" /><rect x="10" y="1" width="14" height="10" fill="#dfe3ea" /><rect x="18" y="2" width="4" height="8" fill="#2a2fa0" /><rect x="5" y="15" width="22" height="15" fill="#fff" /><path d="M6 19H26M6 23H26M6 27H17" stroke="#c33" strokeWidth="1.300" /><path d="M21 25H18V29H21V27H18M23 25V27H26M26 25V29" fill="none" stroke="#555" strokeWidth=".8" /></> },
    { label: 'P tool', icon: <><path d="M9 7H24Q30 8 30 14Q29 22 20 23H16L14 31H3L6 22H12L14 15H21V18H24V12H8Z" fill="#0f9a48" /><path d="M3 24L6 6Q7 2 11 2H24" fill="none" stroke="#0f9a48" strokeWidth="1.500" /></> },
    { label: 'G tool', icon: <path d="M29 2L26 8H13L9 13V22L11 25H20L21 19H15L17 14H28L24 30H7L2 25V12L10 4H22Z" fill="#e02a1c" /> },
    { label: 'Wing', icon: <><circle cx="16" cy="16" r="16" fill="#1f84dd" /><path d="M6 8Q15 9 24 14Q26 17 24 20L22 22H24L19 29L20 24H17Q18 22 13 19L15 18Q10 16 8 13L10 13Q7 11 6 8Z" fill="#fff" /></> },
    { label: 'Genesis', icon: diskIcon },
    { label: 'X server', active: true, stack: true, icon: <><path d="M1 3H11L31 29H21Z" fill="#7c0a80" stroke="#fff" strokeWidth=".8" /><path d="M29 3L2 29" stroke="#fff" strokeWidth="3.500" /><path d="M29 3L2 29" stroke="#301030" strokeWidth="1.500" /></> },
    { label: 'Spreadsheet', stack: true, icon: <><path d="M2 9Q3 1 11 1H26V26H2Z" fill="#e9f5e4" stroke="#46a02c" strokeWidth="1.500" /><path d="M8 9L31 10V31L9 28Z" fill="#fff" stroke="#999" strokeWidth=".6" /><path d="M21 12H29V16H21ZM21 18H29V22H21ZM21 24H29V28H21ZM13 23H19V27H13Z" fill="#69a84f" /><path d="M8 8L19 20M18 8L8 20" stroke="#1d5a1d" strokeWidth="3" /></> },
    { label: 'Notepad', icon: <><path d="M9 4L29 5L28 29L22 30L3 26Z" fill="#cfe9f0" /><path d="M9 6L25 7L21 27L2 25Z" fill="#6fb6c8" /><path d="M27 7L29 28L20 28Z" fill="#f4fafa" /><path d="M10 4.500L28 5.500" stroke="#888" strokeWidth="2" strokeDasharray="1.500 1" /></> },
    { label: 'Genesis viewer', icon: diskIcon },
];

const Taskbar = () => (
    <footer className="flex h-10 shrink-0 border-t border-[#7fa9c4] bg-[linear-gradient(100deg,#245f8e_0%,#2e78ad_4%,#3b8ec8_15%,#2f85c4_30%,#3f9bd8_42%,#2c7cc0_54%,#2a6db0_66%,#69a7da_69%,#1f5896_72%,#2360a0_86%,#1f4d86_92%,#1b4377_100%)]">
        <button aria-label="Start" className="w-[60px] shrink-0 pl-[8px]">
            <svg viewBox="0 0 38 38" className="h-[38px] w-[38px]">
                <defs>
                    <radialGradient id="orb" cx=".5" cy=".8" r=".8">
                        <stop offset="0" stopColor="#4fd0f0" />
                        <stop offset=".5" stopColor="#1d6ea6" />
                        <stop offset="1" stopColor="#163f66" />
                    </radialGradient>
                </defs>
                <circle cx="19" cy="19" r="18" fill="url(#orb)" stroke="#8fb8d0" />
                <path d="M3 13A17 17 0 0 1 35 13Q19 20 3 13Z" fill="#fff" opacity=".35" />
                <path d="M11 11Q15 9 19 11L17.500 18Q13.500 16 9.500 18Z" fill="#ef5a22" />
                <path d="M20 11.500Q24 13 28.500 11L27 18.500Q22 20 18.500 18.500Z" fill="#8cc63e" />
                <path d="M9 19.500Q13 17.500 17 19.500L15.500 27Q11.500 25 7.500 27Z" fill="#4aa6e8" />
                <path d="M18 20Q22 22 26.500 20L25 27.500Q20 29 16.500 27.500Z" fill="#ffd02c" />
            </svg>
        </button>
        <ul className="flex gap-1">
            {taskIcons.map((task) => (
                <li key={task.label} className="flex w-[58px]">
                    <button
                        aria-label={task.label}
                        className={`flex flex-1 items-center justify-center rounded-xs border border-[#b9dcf0] outline-1 outline-[#20587f] ${task.active ? 'bg-linear-to-br from-[#eaf4fa] to-[#8ec2e0]' : 'bg-linear-to-br from-[#9cc9e6] to-[#3c8fc4]'}`}
                    >
                        <svg viewBox="0 0 32 32" className="h-8 w-8 shrink-0">{task.icon}</svg>
                    </button>
                    {task.stack && <span className="ml-[2px] w-[3px] rounded-r-sm border-r border-[#b9dcf0] bg-[#5ba3d0]" />}
                </li>
            ))}
        </ul>
        <div className="ml-auto flex items-center text-white">
            <svg viewBox="0 0 90 24" className="h-6 w-[90px]">
                <path d="M4 13H12L8 9Z" fill="#fff" />
                <path d="M27 5V21" stroke="#fff" strokeWidth="2" />
                <path d="M28 6Q32 4 34 7H38V14Q33 15 28 13Z" fill="#fff" />
                <circle cx="36" cy="16" r="4.500" fill="#dd2a20" />
                <path d="M34 14L38 18M38 14L34 18" stroke="#fff" strokeWidth="1.300" />
                <path d="M54 7H64V17H54ZM56 20H63M59.500 17V20" fill="none" stroke="#fff" strokeWidth="1.600" />
                <path d="M51 5H56V10H51ZM53.500 10V19H56" fill="#1f4d86" stroke="#fff" />
                <path d="M74 9H77L81 5V19L77 15H74Z" fill="#fff" />
                <path d="M83 9Q85 12 83 15M85.500 7Q89 12 85.500 17" stroke="#fff" fill="none" />
            </svg>
            <time className={`${SANS} w-[82px] pl-1 text-center text-[12px] leading-[18px]`}>
                18:24
                <br />
                2021/1/14
            </time>
            <button aria-label="Show desktop" className="h-full w-[14px] border border-[#6d8db4] bg-linear-to-b from-[#4c6f9c] to-[#27497b]" />
        </div>
    </footer>
);

const App: React.FC = () => (
    <div className="flex h-screen w-full flex-col overflow-hidden bg-black text-black">
        <TitleBar />
        <MenuBar />
        <div className="flex min-h-0 flex-1">
            <LeftPanel />
            <Canvas />
            <RightPanel />
        </div>
        <StatusRow />
        <MessageRow />
        <Taskbar />
    </div>
);

export default App;
